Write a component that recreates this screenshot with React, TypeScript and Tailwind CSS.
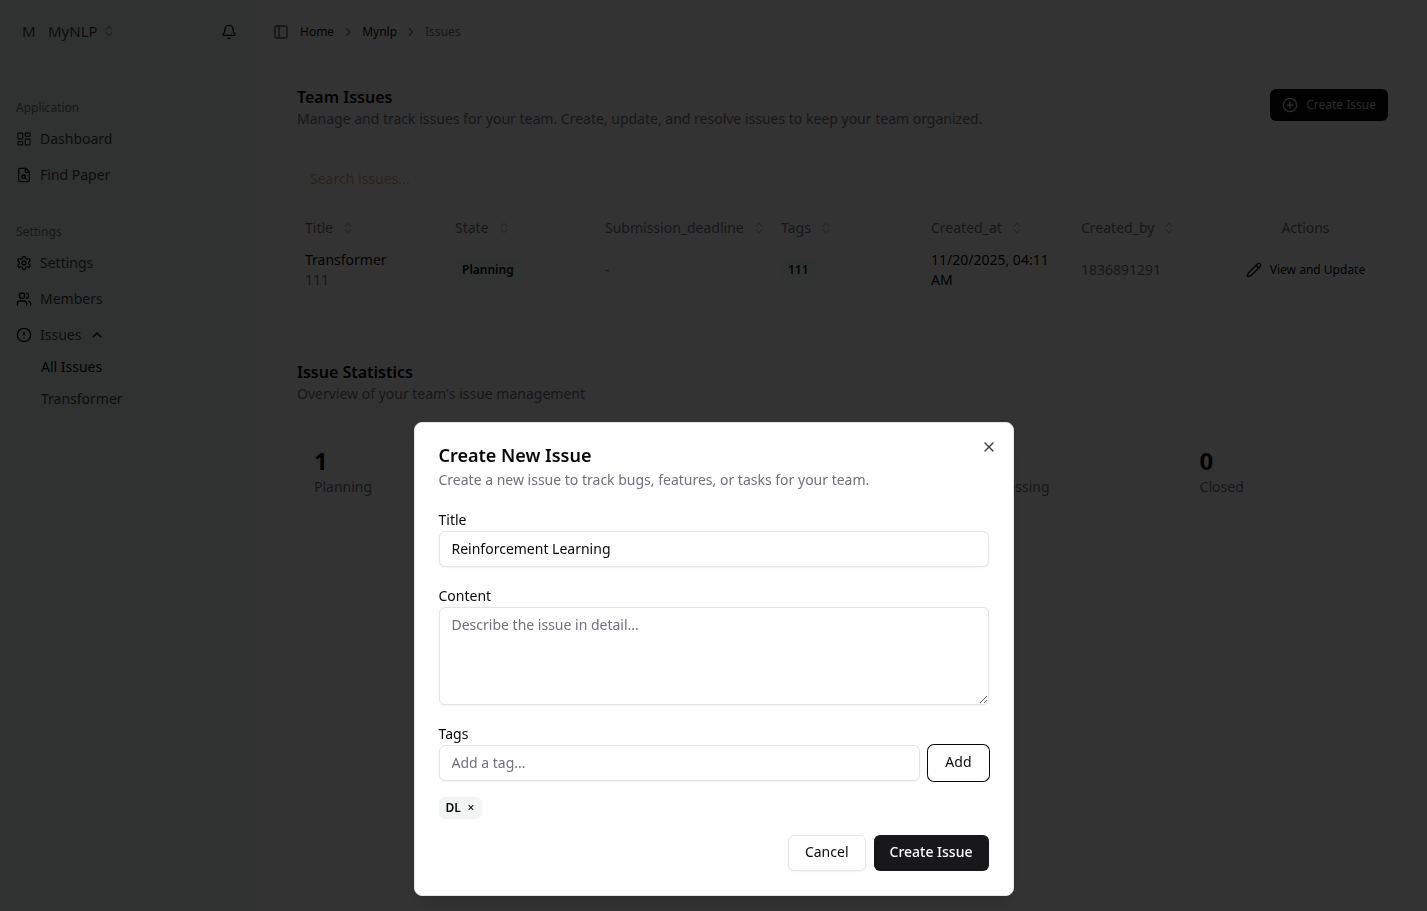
import React, { useState } from 'react';
import {
  Bell, ChevronRight, ChevronUp, ChevronsUpDown, CircleAlert, CirclePlus, FileSearch,
  LayoutDashboard, PanelLeft, Pencil, Settings, Users, X,
} from 'lucide-react';

const itemClass = 'flex h-8 items-center gap-2 px-2 text-sm text-zinc-700';
const groupLabelClass = 'flex h-8 items-center px-2 pt-0.5 text-xs text-zinc-500';

function Sidebar() {
  return (
    <aside className="flex w-64 shrink-0 flex-col bg-[#f0f8f5]">
      <div className="flex h-16 items-center justify-between pr-[19px] pl-[22px]">
        <button type="button" className="flex items-center pb-0.5 text-[15px] text-zinc-700">
          <span className="w-[26px] text-left">M</span>
          <span>MyNLP</span>
          <ChevronsUpDown className="ml-1 size-3.5 text-[#a09890]" />
        </button>
        <button type="button" aria-label="Notifications">
          <Bell className="size-4 text-zinc-950" />
        </button>
      </div>
      <nav className="px-2 pt-[27px]">
        <h2 className={groupLabelClass}>Application</h2>
        <ul className="flex flex-col gap-1">
          <li><a href="#dashboard" className={itemClass}><LayoutDashboard className="size-4" />Dashboard</a></li>
          <li><a href="#papers" className={itemClass}><FileSearch className="size-4 text-zinc-950" />Find Paper</a></li>
        </ul>
        <h2 className={`mt-6 ${groupLabelClass}`}>Settings</h2>
        <ul className="flex flex-col gap-1">
          <li><a href="#settings" className={itemClass}><Settings className="size-4 text-zinc-950" />Settings</a></li>
          <li><a href="#members" className={itemClass}><Users className="size-4 text-zinc-950" />Members</a></li>
          <li>
            <button type="button" className={itemClass}>
              <CircleAlert className="size-4 text-zinc-950" />Issues<ChevronUp className="size-4 text-zinc-950" />
            </button>
            <ul className="pl-[33px] text-sm">
              <li><a href="#all" className="flex h-8 items-center text-zinc-950">All Issues</a></li>
              <li><a href="#transformer" className="flex h-8 items-center text-zinc-700">Transformer</a></li>
            </ul>
          </li>
        </ul>
      </nav>
    </aside>
  );
}

function Heading({ label }: { label: string }) {
  return (
    <th className="h-[29px] px-2 text-left font-normal">
      <button type="button" className="flex items-center gap-2">
        {label}
        <ChevronsUpDown className="size-3.5 text-[#d0bcac]" />
      </button>
    </th>
  );
}

const cardClass = 'rounded-xl border border-[#f9f9f9] bg-white p-6';
const badgeClass = 'inline-flex h-[22px] items-center rounded-md bg-[#f5faf8] px-[7px] text-xs font-semibold text-zinc-950';

function IssuesCard() {
  return (
    <section className={cardClass}>
      <div className="flex items-start justify-between">
        <div className="flex flex-col gap-1">
          <h1 className="text-base leading-4 font-semibold">Team Issues</h1>
          <p className="text-sm text-zinc-500">Manage and track issues for your team. Create, update, and resolve issues to keep your team organized.</p>
        </div>
        <button type="button" className="flex h-8 items-center gap-2 rounded-md bg-zinc-950 px-3 text-xs text-zinc-300">
          <CirclePlus className="size-4" />Create Issue
        </button>
      </div>
      <input aria-label="Search issues" placeholder="Search issues..." className="mt-8 h-9 w-96 rounded-md border border-[#f9f9f9] px-3 pb-0.5 text-sm placeholder:text-[#c8ac8c]" />
      <table className="mt-4 w-full table-fixed text-sm">
        <colgroup>
          <col className="w-[150px]" /><col className="w-[150px]" /><col className="w-[176px]" /><col className="w-[150px]" />
          <col className="w-[150px]" /><col className="w-[150px]" /><col />
        </colgroup>
        <thead className="text-zinc-500">
          <tr>
            <Heading label="Title" /><Heading label="State" /><Heading label="Submission_deadline" /><Heading label="Tags" />
            <Heading label="Created_at" /><Heading label="Created_by" />
            <th className="px-2 text-center font-normal">Actions</th>
          </tr>
        </thead>
        <tbody>
          <tr>
            <td className="p-2"><div>Transformer</div><div className="text-zinc-500">111</div></td>
            <td className="p-2"><span className={badgeClass}>Planning</span></td>
            <td className="p-2 text-zinc-500">-</td>
            <td className="p-2"><span className={badgeClass}>111</span></td>
            <td className="p-2">11/20/2025, 04:11 AM</td>
            <td className="p-2 text-zinc-500">1836891291</td>
            <td className="p-2">
              <button type="button" className="mx-auto flex h-8 items-center gap-2 rounded-md border border-[#f5fafa] px-3 text-xs whitespace-nowrap">
                <Pencil className="size-4" />View and Update
              </button>
            </td>
          </tr>
        </tbody>
      </table>
    </section>
  );
}

const stats = [
  { label: 'Planning', value: 1, column: 'col-start-1' },
  { label: 'Processing', column: 'col-start-4' },
  { label: 'Closed', value: 0, column: 'col-start-5' },
];

function StatsCard() {
  return (
    <section className={cardClass}>
      <h2 className="text-base leading-4 font-semibold">Issue Statistics</h2>
      <p className="mt-1 text-sm text-zinc-500">Overview of your team's issue management</p>
      <ul className="mt-6 grid grid-cols-5 gap-4">
        {stats.map((s) => (
          <li key={s.label} className={`${s.column} flex flex-col justify-end rounded-lg border border-[#f9f9f9] p-4`}>
            {s.value !== undefined && <div className="text-2xl font-bold">{s.value}</div>}
            <div className="text-sm text-zinc-500">{s.label}</div>
          </li>
        ))}
      </ul>
    </section>
  );
}

const fieldClass = 'w-full rounded-md border border-zinc-200 bg-white px-3 text-sm shadow-xs outline-none placeholder:text-zinc-500';
const labelClass = 'flex h-6 items-center pt-0.5 text-sm';
const buttonClass = 'h-9 rounded-md px-4 pb-0.5 text-sm';

function CreateIssueDialog() {
  const [title, setTitle] = useState('Reinforcement Learning');
  return (
    <div className="fixed inset-0 flex items-end justify-center bg-black/80 pb-[15px]">
      <form role="dialog" aria-labelledby="dialog-title" className="relative flex w-full max-w-[600px] flex-col gap-4 rounded-lg border border-zinc-200 bg-white p-6 shadow-lg">
        <button type="button" aria-label="Close" className="absolute top-4 right-4 text-zinc-700"><X className="size-4" /></button>
        <div className="flex flex-col gap-[7px] pb-px">
          <h2 id="dialog-title" className="text-lg leading-4 font-semibold">Create New Issue</h2>
          <p className="text-sm text-zinc-500">Create a new issue to track bugs, features, or tasks for your team.</p>
        </div>
        <div>
          <label htmlFor="title" className={labelClass}>Title</label>
          <input id="title" value={title} onChange={(e) => setTitle(e.target.value)} className={`${fieldClass} h-9 pb-0.5`} />
        </div>
        <div>
          <label htmlFor="content" className={labelClass}>Content</label>
          <textarea id="content" placeholder="Describe the issue in detail..." className={`${fieldClass} block h-[98px] resize-y py-[7px]`} />
        </div>
        <div>
          <label htmlFor="tags" className={labelClass}>Tags</label>
          <div className="flex gap-2">
            <input id="tags" placeholder="Add a tag..." className={`${fieldClass} h-9 min-w-0 flex-1 pb-0.5`} />
            <button type="button" className={`${buttonClass} border border-white bg-white ring-1 ring-zinc-950`}>Add</button>
          </div>
        </div>
        <div className="flex">
          <span className="flex h-[22px] items-center gap-1.5 rounded-md bg-[#f3f5f5] px-[7px] text-xs font-semibold">
            DL
            <button type="button" aria-label="Remove DL" className="w-2 font-medium">×</button>
          </span>
        </div>
        <div className="flex justify-end gap-2">
          <button type="button" className={`${buttonClass} border border-zinc-200 shadow-xs`}>Cancel</button>
          <button type="submit" className={`${buttonClass} bg-zinc-900 font-medium text-zinc-50`}>Create Issue</button>
        </div>
      </form>
    </div>
  );
}

export default function App() {
  return (
    <div className="flex min-h-screen bg-white font-['Noto_Sans','Open_Sans',sans-serif] text-zinc-950">
      <Sidebar />
      <div className="flex min-w-0 flex-1 flex-col">
        <header className="flex h-16 items-center gap-[11px] px-[17px] text-xs">
          <button type="button" aria-label="Toggle sidebar"><PanelLeft className="size-4 text-zinc-600" /></button>
          <nav aria-label="Breadcrumb" className="flex items-center gap-[7px]">
            <a href="#home">Home</a>
            <ChevronRight className="size-3.5 text-zinc-500" />
            <a href="#mynlp">Mynlp</a>
            <ChevronRight className="size-3.5 text-zinc-500" />
            <span className="text-zinc-500">Issues</span>
          </nav>
        </header>
        <main className="flex flex-col gap-4 pr-[14px] pl-4">
          <IssuesCard />
          <StatsCard />
        </main>
      </div>
      <CreateIssueDialog />
    </div>
  );
}
